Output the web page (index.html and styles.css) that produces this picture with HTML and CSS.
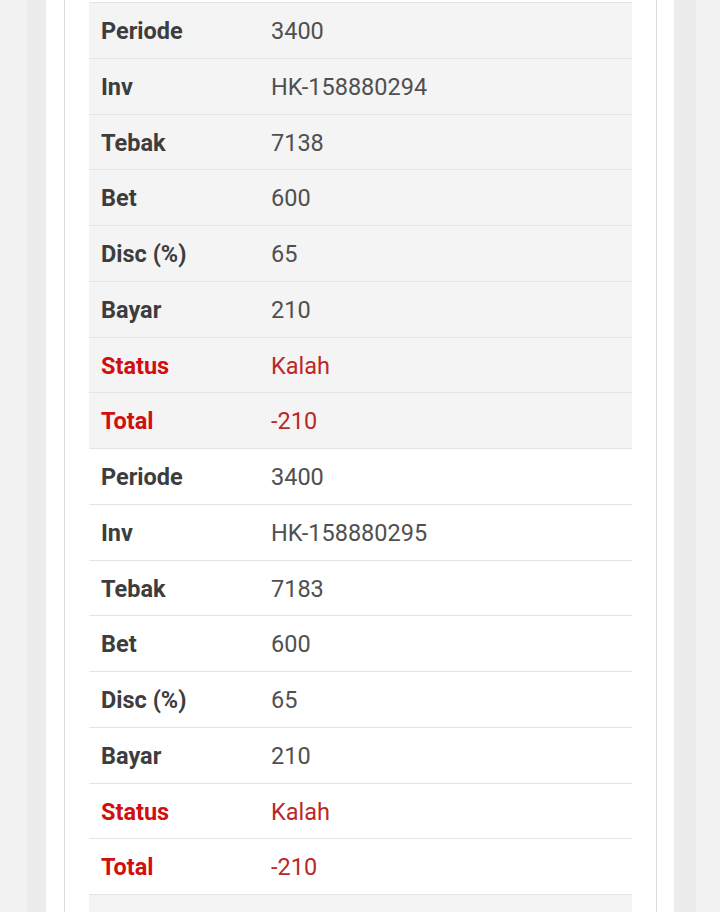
FILE: index.html
```html
<!DOCTYPE html>
<html>
<head>
<meta charset="utf-8">
<link rel="stylesheet" href="styles.css">
</head>
<body>
<div class="page">
  <div class="card">
    <div class="panel">
      <table class="bets">
        <tbody class="group odd">
          <tr><th>Periode</th><td>3400</td></tr>
          <tr><th>Inv</th><td>HK-158880294</td></tr>
          <tr><th>Tebak</th><td>7138</td></tr>
          <tr><th>Bet</th><td>600</td></tr>
          <tr><th>Disc (%)</th><td>65</td></tr>
          <tr><th>Bayar</th><td>210</td></tr>
          <tr class="red"><th>Status</th><td>Kalah</td></tr>
          <tr class="red"><th>Total</th><td>-210</td></tr>
        </tbody>
        <tbody class="group even">
          <tr><th>Periode</th><td>3400</td></tr>
          <tr><th>Inv</th><td>HK-158880295</td></tr>
          <tr><th>Tebak</th><td>7183</td></tr>
          <tr><th>Bet</th><td>600</td></tr>
          <tr><th>Disc (%)</th><td>65</td></tr>
          <tr><th>Bayar</th><td>210</td></tr>
          <tr class="red"><th>Status</th><td>Kalah</td></tr>
          <tr class="red"><th>Total</th><td>-210</td></tr>
        </tbody>
        <tbody class="group odd">
          <tr class="blank"><th></th><td></td></tr>
        </tbody>
      </table>
    </div>
  </div>
</div>
</body>
</html>
```
FILE: styles.css
```css
html, body {
  margin: 0;
  padding: 0;
  background: #f2f2f2;
  font-family: Roboto, "Liberation Sans", sans-serif;
  overflow: hidden;
}
.page {
  margin: 0 24px 0 27px;
  background: #ececec;
  padding: 0 22px 0 19px;
  height: 912px;
}
.card {
  background: #fff;
  padding: 0 17px 0 18px;
  height: 100%;
}
.panel {
  border-left: 1px solid #dcdcdc;
  border-right: 1px solid #dcdcdc;
  padding: 2px 24px 0 24px;
  height: 100%;
  box-sizing: border-box;
  overflow: hidden;
}
.bets {
  width: 100%;
  border-collapse: collapse;
  font-size: 23.5px;
}
.bets th, .bets td {
  border-top: 1px solid #e4e4e4;
  padding: 13px 12px 11px 12px;
  height: 30.75px;
  line-height: 30.75px;
  text-align: left;
  vertical-align: middle;
}
.bets th {
  width: 146px;
  font-weight: 700;
  color: #3d3d3d;
}
.bets td {
  font-weight: 400;
  color: #505050;
}
.group.odd tr {
  background: #f4f4f4;
}
.group.even tr {
  background: #fff;
}
.bets tr.red th {
  color: #d20f0f;
}
.bets tr.red td {
  color: #bb2828;
}
```
